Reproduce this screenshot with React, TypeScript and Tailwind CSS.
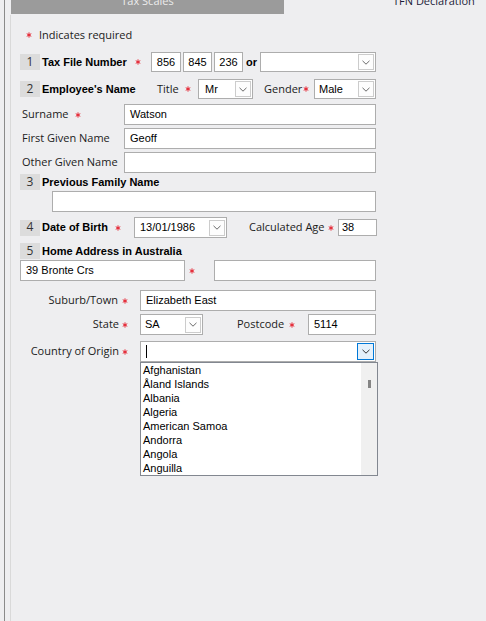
import React from "react";

const LBL = "font-['Open_Sans',sans-serif] text-[11px] text-[#1b1b1b] whitespace-nowrap leading-none pb-[2px]";
const BOLD = "font-['Liberation_Sans',Arial,sans-serif] font-bold text-[11px] text-black whitespace-nowrap leading-none";
const VAL = "font-['Liberation_Sans',Arial,sans-serif] text-[11px] text-black whitespace-nowrap leading-none";
const ITEM = "font-['Liberation_Sans',Arial,sans-serif] text-[11px] text-black whitespace-nowrap h-[14px] leading-[14px]";

const Star = () => (
  <span className="inline-flex w-[6px] h-[6px] items-center justify-center">
    <svg width="6" height="6" viewBox="0 0 6 6">
      <g stroke="#e5202e" strokeWidth="1">
        <line x1="3" y1="0.4" x2="3" y2="5.6" />
        <line x1="0.75" y1="1.7" x2="5.25" y2="4.3" />
        <line x1="0.75" y1="4.3" x2="5.25" y2="1.7" />
      </g>
    </svg>
  </span>
);

const Chevron = ({ color = "#6a6a6a" }: { color?: string }) => (
  <svg width="8" height="5" viewBox="0 0 8 5">
    <path d="M0.5 0.8 L4 4.2 L7.5 0.8" fill="none" stroke={color} strokeWidth="1" />
  </svg>
);

const DropBtn = ({ active }: { active?: boolean }) =>
  active ? (
    <div className="w-[17px] h-[17px] flex items-center justify-center border border-[#0078d7] bg-[#e5f1fb]">
      <Chevron color="#333333" />
    </div>
  ) : (
    <div className="w-[16px] h-[16px] flex items-center justify-center border border-[#cccccc] bg-[#fdfdfd]">
      <Chevron />
    </div>
  );

const NumBox = ({ n }: { n: string }) => (
  <div className="w-[20px] h-[16px] bg-[#dcdcdc] flex items-center justify-center font-['Open_Sans',sans-serif] text-[12px] text-[#333] leading-none pb-[1px]">
    {n}
  </div>
);

const countries = [
  "Afghanistan",
  "Åland Islands",
  "Albania",
  "Algeria",
  "American Samoa",
  "Andorra",
  "Angola",
  "Anguilla",
];

export default function App() {
  return (
    <div className="w-[486px] h-[621px] bg-[#eeeef0] flex overflow-hidden">
      <div className="w-[4px] shrink-0" />
      <div className="w-px shrink-0 bg-[#8a8a8a]" />
      <div className="w-[5px] shrink-0" />
      <div className="w-px shrink-0 flex flex-col">
        <div className="h-[15px]" />
        <div className="flex-1 bg-[#d9d9d9]" />
      </div>
      <div className="flex-1 flex flex-col">
        {/* header tabs */}
        <div className="h-[14px] flex overflow-hidden">
          <div className="w-[273px] h-[14px] bg-[#9b9b9b] flex justify-center overflow-hidden">
            <span className="block mt-[-5px] font-['Open_Sans',sans-serif] text-[11px] leading-[12px] text-[#ececec]">Tax Scales</span>
          </div>
          <div className="ml-[109px] overflow-hidden">
            <span className="block mt-[-5px] font-['Open_Sans',sans-serif] text-[11px] leading-[12px] text-[#1c1c3a]">TFN Declaration</span>
          </div>
        </div>

        <div className="pl-[9px] flex flex-col">
          {/* indicates required */}
          <div className="mt-[15px] h-[12px] flex items-center">
            <div className="ml-[6px] flex items-center"><Star /></div>
            <span className={LBL + " ml-[7px]"}>Indicates required</span>
          </div>

          {/* Row 1 */}
          <div className="mt-[11px] h-[20px] flex items-center">
            <NumBox n="1" />
            <div className="ml-[2px] w-[109px] flex items-center">
              <span className={BOLD + " w-[93px]"}>Tax File Number</span>
              <Star />
            </div>
            <div className={VAL + " w-[30px] h-[20px] border border-[#adadad] bg-white flex items-center justify-center"}>856</div>
            <div className={VAL + " ml-[2px] w-[29px] h-[20px] border border-[#adadad] bg-white flex items-center justify-center"}>845</div>
            <div className={VAL + " ml-[2px] w-[29px] h-[20px] border border-[#adadad] bg-white flex items-center justify-center"}>236</div>
            <span className={BOLD + " ml-[3px] w-[14px]"}>or</span>
            <div className="w-[116px] h-[20px] border border-[#adadad] bg-white flex items-center justify-end pr-[1px]">
              <DropBtn />
            </div>
          </div>

          {/* Row 2 */}
          <div className="mt-[7px] h-[20px] flex items-center">
            <NumBox n="2" />
            <div className="ml-[2px] w-[115px] flex items-center">
              <span className={BOLD}>Employee's Name</span>
            </div>
            <div className="w-[41px] flex items-center">
              <span className={LBL + " w-[28px]"}>Title</span>
              <Star />
            </div>
            <div className="w-[55px] h-[20px] border border-[#adadad] bg-white flex items-center justify-between pl-[6px] pr-[1px]">
              <span className={VAL}>Mr</span>
              <DropBtn />
            </div>
            <div className="ml-[11px] w-[50px] flex items-center">
              <span className={LBL + " w-[39px]"}>Gender</span>
              <Star />
            </div>
            <div className="w-[62px] h-[20px] border border-[#adadad] bg-white flex items-center justify-between pl-[4px] pr-[1px]">
              <span className={VAL}>Male</span>
              <DropBtn />
            </div>
          </div>

          {/* Surname */}
          <div className="mt-[5px] h-[21px] flex items-center">
            <div className="ml-[2px] w-[102px] flex items-center">
              <span className={LBL}>Surname</span>
              <div className="ml-[6px] flex items-center"><Star /></div>
            </div>
            <div className="w-[252px] h-[21px] border border-[#adadad] bg-white flex items-center pl-[5px]">
              <span className={VAL}>Watson</span>
            </div>
          </div>

          {/* First Given Name */}
          <div className="mt-[3px] h-[21px] flex items-center">
            <div className="ml-[2px] w-[102px] flex items-center">
              <span className={LBL}>First Given Name</span>
            </div>
            <div className="w-[252px] h-[21px] border border-[#adadad] bg-white flex items-center pl-[5px]">
              <span className={VAL}>Geoff</span>
            </div>
          </div>

          {/* Other Given Name */}
          <div className="mt-[3px] h-[21px] flex items-center">
            <div className="ml-[2px] w-[102px] flex items-center">
              <span className={LBL}>Other Given Name</span>
            </div>
            <div className="w-[252px] h-[21px] border border-[#adadad] bg-white" />
          </div>

          {/* Row 3 */}
          <div className="mt-[1px] h-[16px] flex items-center">
            <NumBox n="3" />
            <span className={BOLD + " ml-[2px]"}>Previous Family Name</span>
          </div>
          <div className="mt-[1px] h-[21px] flex">
            <div className="ml-[32px] w-[324px] h-[21px] border border-[#adadad] bg-white" />
          </div>

          {/* Row 4 */}
          <div className="mt-[5px] h-[21px] flex items-center">
            <NumBox n="4" />
            <div className="ml-[2px] w-[92px] flex items-center">
              <span className={BOLD + " w-[73px]"}>Date of Birth</span>
              <Star />
            </div>
            <div className="w-[93px] h-[21px] border border-[#adadad] bg-white flex items-center justify-between pl-[5px] pr-[1px]">
              <span className={VAL}>13/01/1986</span>
              <DropBtn />
            </div>
            <span className={LBL + " ml-[22px] w-[79px]"}>Calculated Age</span>
            <Star />
            <div className="ml-[4px] w-[39px] h-[17px] border border-[#adadad] bg-white flex items-center pl-[3px]">
              <span className={VAL}>38</span>
            </div>
          </div>

          {/* Row 5 */}
          <div className="mt-[5px] h-[16px] flex items-center">
            <NumBox n="5" />
            <span className={BOLD + " ml-[2px]"}>Home Address in Australia</span>
          </div>
          <div className="mt-[1px] h-[21px] flex items-center">
            <div className="w-[165px] h-[21px] border border-[#adadad] bg-white flex items-center pl-[5px]">
              <span className={VAL}>39 Bronte Crs</span>
            </div>
            <div className="ml-[4px] flex items-center"><Star /></div>
            <div className="ml-[19px] w-[162px] h-[21px] border border-[#adadad] bg-white" />
          </div>

          {/* Suburb */}
          <div className="mt-[9px] h-[21px] flex items-center">
            <div className="w-[120px] pr-[12px] flex items-center justify-end">
              <span className={LBL + " mr-[4px]"}>Suburb/Town</span>
              <Star />
            </div>
            <div className="w-[236px] h-[21px] border border-[#adadad] bg-white flex items-center pl-[5px]">
              <span className={VAL}>Elizabeth East</span>
            </div>
          </div>

          {/* State / Postcode */}
          <div className="mt-[3px] h-[21px] flex items-center">
            <div className="w-[120px] pr-[12px] flex items-center justify-end">
              <span className={LBL + " mr-[3px]"}>State</span>
              <Star />
            </div>
            <div className="w-[63px] h-[21px] border border-[#adadad] bg-white flex items-center justify-between pl-[4px] pr-[1px]">
              <span className={VAL}>SA</span>
              <DropBtn />
            </div>
            <span className={LBL + " ml-[34px] w-[52px]"}>Postcode</span>
            <Star />
            <div className="ml-[13px] w-[68px] h-[21px] border border-[#adadad] bg-white flex items-center pl-[5px]">
              <span className={VAL}>5114</span>
            </div>
          </div>

          {/* Country */}
          <div className="mt-[6px] h-[21px] flex items-center">
            <div className="w-[120px] pr-[12px] flex items-center justify-end">
              <span className={LBL + " mr-[3px]"}>Country of Origin</span>
              <Star />
            </div>
            <div className="relative w-[236px] h-[21px]">
              <div className="w-[236px] h-[21px] border border-[#adadad] bg-white flex items-center justify-between pl-[5px] pr-[1px]">
                <div className="w-px h-[13px] bg-black" />
                <DropBtn active />
              </div>
              <div className="absolute left-0 top-[21px] w-[238px] h-[114px] border border-[#828790] bg-white flex z-10">
                <div className="flex-1 flex flex-col pl-[2px]">
                  {countries.map((c) => (
                    <div key={c} className={ITEM}>{c}</div>
                  ))}
                </div>
                <div className="w-[16px] bg-[#f0f0f0] flex justify-center">
                  <div className="mt-[17px] w-[3px] h-[8px] bg-[#858585]" />
                </div>
              </div>
            </div>
          </div>
        </div>
      </div>
    </div>
  );
}
